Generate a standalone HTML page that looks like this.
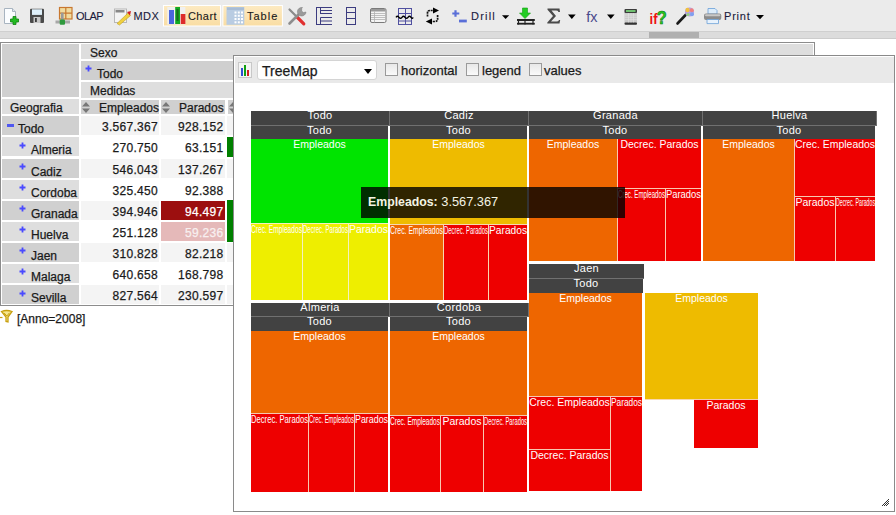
<!DOCTYPE html>
<html><head><meta charset="utf-8"><style>
html,body{margin:0;padding:0;}
body{width:896px;height:515px;position:relative;overflow:hidden;background:#fff;font-family:"Liberation Sans", sans-serif;}
body div{position:absolute;box-sizing:border-box;}
.t{white-space:nowrap;line-height:1;-webkit-text-stroke:0.25px currentColor;}
.r{text-align:right;}
.lb{text-align:center;color:#fff;line-height:1;white-space:nowrap;overflow:visible;}
.lb span{display:inline-block;transform-origin:50% 0;}
.hl{text-align:center;color:#fff;font-size:11px;line-height:1;white-space:nowrap;margin-top:-1px;letter-spacing:0.3px}
</style></head><body>
<div style="left:0px;top:0px;width:896px;height:31px;background:#ebebeb;"></div><div style="left:0px;top:31px;width:896px;height:1px;background:#cfcfcf;"></div><div style="left:0px;top:32px;width:896px;height:6px;background:#dcdcdc;"></div><div style="left:649px;top:32px;width:50px;height:6px;background:#b0b0b0;"></div><div style="left:0px;top:38px;width:896px;height:1px;background:#cccccc;"></div><div style="left:0px;top:42px;width:815px;height:264px;background:#8c8c8c;"></div><div style="left:1px;top:43px;width:813px;height:262px;background:#ffffff;"></div><div style="left:2px;top:44px;width:77px;height:53px;background:#d0d0d0;"></div><div style="left:81px;top:44px;width:732px;height:15px;background:#dedede;"></div><div style="left:81px;top:61px;width:732px;height:19px;background:#cfcfcf;"></div><div style="left:81px;top:82px;width:732px;height:16px;background:#dedede;"></div><div style="left:2px;top:99px;width:77px;height:15px;background:#dedede;"></div><div style="left:81px;top:100px;width:78px;height:14px;background:#d0d0d0;"></div><div style="left:161px;top:100px;width:64px;height:14px;background:#d0d0d0;"></div><div style="left:228px;top:100px;width:12px;height:14px;background:#d0d0d0;"></div><div class="t" style="left:90px;top:47px;font-size:12px;color:#1a1a1a;">Sexo</div><div class="t" style="left:97px;top:68px;font-size:12px;color:#1a1a1a;">Todo</div><div class="t" style="left:90px;top:85px;font-size:12px;color:#1a1a1a;">Medidas</div><div class="t" style="left:10px;top:102px;font-size:12px;color:#1a1a1a;">Geografia</div><div class="t" style="left:99px;top:102px;font-size:12px;color:#1a1a1a;">Empleados</div><div class="t" style="left:179px;top:102px;font-size:12px;color:#1a1a1a;">Parados</div><svg style="position:absolute;left:85px;top:65px" width="8" height="8"><path d="M3.5 0.5 V6.5 M0.5 3.5 H6.5" stroke="#4a4aff" stroke-width="1.8"/></svg><svg style="position:absolute;left:82px;top:102px" width="8" height="11"><path d="M0 4.5 L4 0 L8 4.5Z M0 6.5 L4 11 L8 6.5Z" fill="#777"/></svg><svg style="position:absolute;left:162px;top:102px" width="8" height="11"><path d="M0 4.5 L4 0 L8 4.5Z M0 6.5 L4 11 L8 6.5Z" fill="#777"/></svg><svg style="position:absolute;left:229px;top:102px" width="8" height="11"><path d="M0 4.5 L4 0 L8 4.5Z M0 6.5 L4 11 L8 6.5Z" fill="#777"/></svg><div style="left:2px;top:116.3px;width:77px;height:19.000000000000014px;background:#d0d0d0;"></div><div style="left:81px;top:116.3px;width:78px;height:19.000000000000014px;background:#f4f4f4;"></div><div style="left:161px;top:116.3px;width:64px;height:19.000000000000014px;background:#f4f4f4;"></div><div style="left:227px;top:116.3px;width:6px;height:19.000000000000014px;background:#f4f4f4;"></div><div style="left:7px;top:124.3px;width:7px;height:2.5px;background:#5058f0"></div><div class="t" style="left:18px;top:123.3px;font-size:12px;color:#1a1a1a;">Todo</div><div class="t r" style="left:81px;width:77px;top:121.3px;font-size:12px;letter-spacing:0.3px;color:#1a1a1a">3.567.367</div><div class="t r" style="left:161px;width:62.5px;top:121.3px;font-size:12px;letter-spacing:0.3px;color:#1a1a1a">928.152</div><div style="left:2px;top:137.4px;width:77px;height:19.0px;background:#dedede;"></div><div style="left:81px;top:137.4px;width:78px;height:19.0px;background:#ffffff;"></div><div style="left:161px;top:137.4px;width:64px;height:19.0px;background:#ffffff;"></div><div style="left:227px;top:137.4px;width:6px;height:19.0px;background:#ffffff;"></div><svg style="position:absolute;left:19px;top:142px" width="8" height="8"><path d="M3.5 0.5 V6.5 M0.5 3.5 H6.5" stroke="#4a4aff" stroke-width="1.8"/></svg><div class="t" style="left:31px;top:144.4px;font-size:12px;color:#1a1a1a;">Almeria</div><div class="t r" style="left:81px;width:77px;top:142.4px;font-size:12px;letter-spacing:0.3px;color:#1a1a1a">270.750</div><div class="t r" style="left:161px;width:62.5px;top:142.4px;font-size:12px;letter-spacing:0.3px;color:#1a1a1a">63.151</div><div style="left:2px;top:158.5px;width:77px;height:19.0px;background:#d0d0d0;"></div><div style="left:81px;top:158.5px;width:78px;height:19.0px;background:#f4f4f4;"></div><div style="left:161px;top:158.5px;width:64px;height:19.0px;background:#f4f4f4;"></div><div style="left:227px;top:158.5px;width:6px;height:19.0px;background:#f4f4f4;"></div><svg style="position:absolute;left:19px;top:163px" width="8" height="8"><path d="M3.5 0.5 V6.5 M0.5 3.5 H6.5" stroke="#4a4aff" stroke-width="1.8"/></svg><div class="t" style="left:31px;top:165.5px;font-size:12px;color:#1a1a1a;">Cadiz</div><div class="t r" style="left:81px;width:77px;top:163.5px;font-size:12px;letter-spacing:0.3px;color:#1a1a1a">546.043</div><div class="t r" style="left:161px;width:62.5px;top:163.5px;font-size:12px;letter-spacing:0.3px;color:#1a1a1a">137.267</div><div style="left:2px;top:179.6px;width:77px;height:19.0px;background:#dedede;"></div><div style="left:81px;top:179.6px;width:78px;height:19.0px;background:#ffffff;"></div><div style="left:161px;top:179.6px;width:64px;height:19.0px;background:#ffffff;"></div><div style="left:227px;top:179.6px;width:6px;height:19.0px;background:#ffffff;"></div><svg style="position:absolute;left:19px;top:184px" width="8" height="8"><path d="M3.5 0.5 V6.5 M0.5 3.5 H6.5" stroke="#4a4aff" stroke-width="1.8"/></svg><div class="t" style="left:31px;top:186.6px;font-size:12px;color:#1a1a1a;">Cordoba</div><div class="t r" style="left:81px;width:77px;top:184.6px;font-size:12px;letter-spacing:0.3px;color:#1a1a1a">325.450</div><div class="t r" style="left:161px;width:62.5px;top:184.6px;font-size:12px;letter-spacing:0.3px;color:#1a1a1a">92.388</div><div style="left:2px;top:200.7px;width:77px;height:19.0px;background:#d0d0d0;"></div><div style="left:81px;top:200.7px;width:78px;height:19.0px;background:#f4f4f4;"></div><div style="left:161px;top:200.7px;width:64px;height:19.0px;background:#9c0f0f;"></div><div style="left:227px;top:200.7px;width:6px;height:19.0px;background:#f4f4f4;"></div><svg style="position:absolute;left:19px;top:205px" width="8" height="8"><path d="M3.5 0.5 V6.5 M0.5 3.5 H6.5" stroke="#4a4aff" stroke-width="1.8"/></svg><div class="t" style="left:31px;top:207.7px;font-size:12px;color:#1a1a1a;">Granada</div><div class="t r" style="left:81px;width:77px;top:205.7px;font-size:12px;letter-spacing:0.3px;color:#1a1a1a">394.946</div><div class="t r" style="left:161px;width:62.5px;top:205.7px;font-size:12px;letter-spacing:0.3px;color:#ffffff">94.497</div><div style="left:2px;top:221.8px;width:77px;height:19.0px;background:#dedede;"></div><div style="left:81px;top:221.8px;width:78px;height:19.0px;background:#ffffff;"></div><div style="left:161px;top:221.8px;width:64px;height:19.0px;background:#e5b9b9;"></div><div style="left:227px;top:221.8px;width:6px;height:19.0px;background:#ffffff;"></div><svg style="position:absolute;left:19px;top:226px" width="8" height="8"><path d="M3.5 0.5 V6.5 M0.5 3.5 H6.5" stroke="#4a4aff" stroke-width="1.8"/></svg><div class="t" style="left:31px;top:228.8px;font-size:12px;color:#1a1a1a;">Huelva</div><div class="t r" style="left:81px;width:77px;top:226.8px;font-size:12px;letter-spacing:0.3px;color:#1a1a1a">251.128</div><div class="t r" style="left:161px;width:62.5px;top:226.8px;font-size:12px;letter-spacing:0.3px;color:#f8f0f0">59.236</div><div style="left:2px;top:242.9px;width:77px;height:18.99999999999997px;background:#d0d0d0;"></div><div style="left:81px;top:242.9px;width:78px;height:18.99999999999997px;background:#f4f4f4;"></div><div style="left:161px;top:242.9px;width:64px;height:18.99999999999997px;background:#f4f4f4;"></div><div style="left:227px;top:242.9px;width:6px;height:18.99999999999997px;background:#f4f4f4;"></div><svg style="position:absolute;left:19px;top:247px" width="8" height="8"><path d="M3.5 0.5 V6.5 M0.5 3.5 H6.5" stroke="#4a4aff" stroke-width="1.8"/></svg><div class="t" style="left:31px;top:249.9px;font-size:12px;color:#1a1a1a;">Jaen</div><div class="t r" style="left:81px;width:77px;top:247.9px;font-size:12px;letter-spacing:0.3px;color:#1a1a1a">310.828</div><div class="t r" style="left:161px;width:62.5px;top:247.9px;font-size:12px;letter-spacing:0.3px;color:#1a1a1a">82.218</div><div style="left:2px;top:264.0px;width:77px;height:19.0px;background:#dedede;"></div><div style="left:81px;top:264.0px;width:78px;height:19.0px;background:#ffffff;"></div><div style="left:161px;top:264.0px;width:64px;height:19.0px;background:#ffffff;"></div><div style="left:227px;top:264.0px;width:6px;height:19.0px;background:#ffffff;"></div><svg style="position:absolute;left:19px;top:268px" width="8" height="8"><path d="M3.5 0.5 V6.5 M0.5 3.5 H6.5" stroke="#4a4aff" stroke-width="1.8"/></svg><div class="t" style="left:31px;top:271.0px;font-size:12px;color:#1a1a1a;">Malaga</div><div class="t r" style="left:81px;width:77px;top:269.0px;font-size:12px;letter-spacing:0.3px;color:#1a1a1a">640.658</div><div class="t r" style="left:161px;width:62.5px;top:269.0px;font-size:12px;letter-spacing:0.3px;color:#1a1a1a">168.798</div><div style="left:2px;top:285.1px;width:77px;height:19.0px;background:#d0d0d0;"></div><div style="left:81px;top:285.1px;width:78px;height:19.0px;background:#f4f4f4;"></div><div style="left:161px;top:285.1px;width:64px;height:19.0px;background:#f4f4f4;"></div><div style="left:227px;top:285.1px;width:6px;height:19.0px;background:#f4f4f4;"></div><svg style="position:absolute;left:19px;top:290px" width="8" height="8"><path d="M3.5 0.5 V6.5 M0.5 3.5 H6.5" stroke="#4a4aff" stroke-width="1.8"/></svg><div class="t" style="left:31px;top:292.1px;font-size:12px;color:#1a1a1a;">Sevilla</div><div class="t r" style="left:81px;width:77px;top:290.1px;font-size:12px;letter-spacing:0.3px;color:#1a1a1a">827.564</div><div class="t r" style="left:161px;width:62.5px;top:290.1px;font-size:12px;letter-spacing:0.3px;color:#1a1a1a">230.597</div><div style="left:227px;top:137px;width:6px;height:20px;background:#008000;"></div><div style="left:227px;top:200px;width:6px;height:42px;background:#008000;"></div><svg style="position:absolute;left:0px;top:309px" width="14" height="15"><path d="M1.5 2.5 Q6.5 0.5 12 2.5 L8 8 V13 L6 12.5 V8Z" fill="#f8e890" stroke="#c8a010" stroke-width="1.3"/><path d="M4 3.8 L6.8 7 L9.5 3.8" fill="none" stroke="#c8a010" stroke-width="1"/><path d="M0 8.5 L2.5 8.5" stroke="#c8a010" stroke-width="1.2"/></svg><div class="t" style="left:17px;top:312.5px;font-size:12px;color:#1a1a1a;">[Anno=2008]</div><div style="left:233px;top:55px;width:662px;height:457px;background:#8a8a8a;"></div><div style="left:234px;top:56px;width:660px;height:455px;background:#ffffff;"></div><div style="left:235px;top:57px;width:659px;height:26px;background:#e9e9e9;"></div><div style="left:238px;top:62px;width:14px;height:16px;background:#c8c8c8;"></div><div style="left:239px;top:63px;width:12px;height:14px;background:#f4f4f4;"></div><div style="left:241px;top:68px;width:2px;height:8px;background:#3050d0;"></div><div style="left:244px;top:65px;width:2px;height:11px;background:#10a010;"></div><div style="left:247px;top:70px;width:2px;height:6px;background:#d02020;"></div><div style="left:257px;top:60px;width:119.5px;height:20px;background:#fff;border:1px solid #d4d4d4;border-radius:3px"></div><div class="t" style="left:262px;top:63.5px;font-size:14px;color:#1a1a1a;">TreeMap</div><svg style="position:absolute;left:364px;top:69px" width="8" height="5"><path d="M0 0 L8 0 L4 5Z" fill="#000"/></svg><div style="left:385px;top:63px;width:12.5px;height:12.5px;border:1px solid #9a9a9a;background:linear-gradient(#e8e8e8,#fafafa)"></div><div class="t" style="left:401px;top:63.5px;font-size:13px;color:#1a1a1a;">horizontal</div><div style="left:466px;top:63px;width:12.5px;height:12.5px;border:1px solid #9a9a9a;background:linear-gradient(#e8e8e8,#fafafa)"></div><div class="t" style="left:482px;top:63.5px;font-size:13px;color:#1a1a1a;">legend</div><div style="left:529px;top:63px;width:12.5px;height:12.5px;border:1px solid #9a9a9a;background:linear-gradient(#e8e8e8,#fafafa)"></div><div class="t" style="left:544px;top:63.5px;font-size:13px;color:#1a1a1a;">values</div><svg style="position:absolute;left:0;top:0" width="896" height="515"><path d="M882 505h1v1h-1zM884 505h1v1h-1zM886 505h1v1h-1zM883 504h1v1h-1zM885 504h1v1h-1zM887 504h1v1h-1zM884 503h1v1h-1zM886 503h1v1h-1zM888 503h1v1h-1zM885 502h1v1h-1zM887 502h1v1h-1zM886 501h1v1h-1zM888 501h1v1h-1zM887 500h1v1h-1zM888 499h1v1h-1z" fill="#333"/></svg><div style="left:251px;top:111px;width:626px;height:15px;background:#707070;"></div><div style="left:251px;top:303px;width:278px;height:14px;background:#707070;"></div><div style="left:529px;top:278px;width:115px;height:1px;background:#707070;"></div><div style="left:251px;top:111px;width:138px;height:14px;background:#424242;"></div><div class="hl" style="left:251px;top:111px;width:138px;">Todo</div><div style="left:251px;top:126px;width:137px;height:13px;background:#424242;"></div><div class="hl" style="left:251px;top:126px;width:137px;">Todo</div><div style="left:390px;top:111px;width:138px;height:14px;background:#424242;"></div><div class="hl" style="left:390px;top:111px;width:138px;">Cadiz</div><div style="left:390px;top:126px;width:137px;height:13px;background:#424242;"></div><div class="hl" style="left:390px;top:126px;width:137px;">Todo</div><div style="left:529px;top:111px;width:173px;height:14px;background:#424242;"></div><div class="hl" style="left:529px;top:111px;width:173px;">Granada</div><div style="left:529px;top:126px;width:172px;height:13px;background:#424242;"></div><div class="hl" style="left:529px;top:126px;width:172px;">Todo</div><div style="left:703px;top:111px;width:173px;height:14px;background:#424242;"></div><div class="hl" style="left:703px;top:111px;width:173px;">Huelva</div><div style="left:703px;top:126px;width:172px;height:13px;background:#424242;"></div><div class="hl" style="left:703px;top:126px;width:172px;">Todo</div><div style="left:251px;top:303px;width:138px;height:13px;background:#424242;"></div><div class="hl" style="left:251px;top:303px;width:138px;">Almeria</div><div style="left:251px;top:317px;width:137px;height:14px;background:#424242;"></div><div class="hl" style="left:251px;top:317px;width:137px;">Todo</div><div style="left:390px;top:303px;width:138px;height:13px;background:#424242;"></div><div class="hl" style="left:390px;top:303px;width:138px;">Cordoba</div><div style="left:390px;top:317px;width:137px;height:14px;background:#424242;"></div><div class="hl" style="left:390px;top:317px;width:137px;">Todo</div><div style="left:529px;top:264px;width:115px;height:14px;background:#424242;"></div><div class="hl" style="left:529px;top:264px;width:115px;">Jaen</div><div style="left:529px;top:279px;width:114px;height:14px;background:#424242;"></div><div class="hl" style="left:529px;top:279px;width:114px;">Todo</div><div style="left:251px;top:139px;width:137px;height:161px;background:#f4f0c0;"></div><div style="left:390px;top:139px;width:137px;height:161px;background:#f8d8b0;"></div><div style="left:529px;top:139px;width:172px;height:122px;background:#f8c8b0;"></div><div style="left:703px;top:139px;width:172px;height:122px;background:#f8c8b0;"></div><div style="left:251px;top:331px;width:137px;height:161px;background:#f8c8b0;"></div><div style="left:390px;top:331px;width:137px;height:161px;background:#f8c8b0;"></div><div style="left:529px;top:293px;width:113px;height:198px;background:#f8c8b0;"></div><div style="left:645px;top:293px;width:113px;height:107px;background:#f8d8b0;"></div><div style="left:694px;top:399px;width:64px;height:49px;background:#f8c8b0;"></div><div style="left:251px;top:139px;width:137px;height:84px;background:#00e400;"></div><div class="lb" style="left:251px;top:139px;width:137px;font-size:10.5px">Empleados</div><div style="left:251px;top:224px;width:51px;height:76px;background:#eeee00;"></div><div class="lb" style="left:251px;top:224px;width:80.53px;font-size:10.5px;transform:scaleX(0.6333);transform-origin:0 0">Crec. Empleados</div><div style="left:303px;top:224px;width:45px;height:76px;background:#eeee00;"></div><div class="lb" style="left:303px;top:224px;width:78.20px;font-size:10.5px;transform:scaleX(0.5755);transform-origin:0 0">Decrec. Parados</div><div style="left:349px;top:224px;width:39px;height:76px;background:#eeee00;"></div><div class="lb" style="left:349px;top:224px;width:39.11px;font-size:10.5px;transform:scaleX(0.9973);transform-origin:0 0">Parados</div><div style="left:390px;top:139px;width:137px;height:85px;background:#eebb00;"></div><div class="lb" style="left:390px;top:139px;width:137px;font-size:10.5px">Empleados</div><div style="left:390px;top:225px;width:53px;height:75px;background:#ee6600;"></div><div class="lb" style="left:390px;top:225px;width:80.53px;font-size:10.5px;transform:scaleX(0.6581);transform-origin:0 0">Crec. Empleados</div><div style="left:444px;top:225px;width:44px;height:75px;background:#ee0000;"></div><div class="lb" style="left:444px;top:225px;width:78.20px;font-size:10.5px;transform:scaleX(0.5627);transform-origin:0 0">Decrec. Parados</div><div style="left:489px;top:225px;width:38px;height:75px;background:#ee0000;"></div><div class="lb" style="left:489px;top:225px;width:39.11px;font-size:10.5px;transform:scaleX(0.9717);transform-origin:0 0">Parados</div><div style="left:529px;top:139px;width:88px;height:122px;background:#ee6600;"></div><div class="lb" style="left:529px;top:139px;width:88px;font-size:10.5px">Empleados</div><div style="left:618px;top:139px;width:83px;height:49px;background:#ee0000;"></div><div class="lb" style="left:618px;top:139px;width:83px;font-size:10.5px">Decrec. Parados</div><div style="left:618px;top:189px;width:47px;height:72px;background:#ee0000;"></div><div class="lb" style="left:618px;top:189px;width:80.53px;font-size:10.5px;transform:scaleX(0.5836);transform-origin:0 0">Crec. Empleados</div><div style="left:666px;top:189px;width:35px;height:72px;background:#ee0000;"></div><div class="lb" style="left:666px;top:189px;width:39.11px;font-size:10.5px;transform:scaleX(0.8950);transform-origin:0 0">Parados</div><div style="left:703px;top:139px;width:91px;height:122px;background:#ee6600;"></div><div class="lb" style="left:703px;top:139px;width:91px;font-size:10.5px">Empleados</div><div style="left:795px;top:139px;width:80px;height:57px;background:#ee0000;"></div><div class="lb" style="left:795px;top:139px;width:80.53px;font-size:10.5px;transform:scaleX(0.9934);transform-origin:0 0">Crec. Empleados</div><div style="left:795px;top:197px;width:40px;height:64px;background:#ee0000;"></div><div class="lb" style="left:795px;top:197px;width:40px;font-size:10.5px">Parados</div><div style="left:836px;top:197px;width:39px;height:64px;background:#ee0000;"></div><div class="lb" style="left:836px;top:197px;width:78.20px;font-size:10.5px;transform:scaleX(0.4987);transform-origin:0 0">Decrec. Parados</div><div style="left:251px;top:331px;width:137px;height:82px;background:#ee6600;"></div><div class="lb" style="left:251px;top:331px;width:137px;font-size:10.5px">Empleados</div><div style="left:251px;top:414px;width:57px;height:78px;background:#ee0000;"></div><div class="lb" style="left:251px;top:414px;width:78.20px;font-size:10.5px;transform:scaleX(0.7289);transform-origin:0 0">Decrec. Parados</div><div style="left:309px;top:414px;width:45px;height:78px;background:#ee0000;"></div><div class="lb" style="left:309px;top:414px;width:80.53px;font-size:10.5px;transform:scaleX(0.5588);transform-origin:0 0">Crec. Empleados</div><div style="left:355px;top:414px;width:33px;height:78px;background:#ee0000;"></div><div class="lb" style="left:355px;top:414px;width:39.11px;font-size:10.5px;transform:scaleX(0.8439);transform-origin:0 0">Parados</div><div style="left:390px;top:331px;width:137px;height:84px;background:#ee6600;"></div><div class="lb" style="left:390px;top:331px;width:137px;font-size:10.5px">Empleados</div><div style="left:390px;top:416px;width:50px;height:76px;background:#ee0000;"></div><div class="lb" style="left:390px;top:416px;width:80.53px;font-size:10.5px;transform:scaleX(0.6209);transform-origin:0 0">Crec. Empleados</div><div style="left:441px;top:416px;width:42px;height:76px;background:#ee0000;"></div><div class="lb" style="left:441px;top:416px;width:42px;font-size:10.5px">Parados</div><div style="left:484px;top:416px;width:43px;height:76px;background:#ee0000;"></div><div class="lb" style="left:484px;top:416px;width:78.20px;font-size:10.5px;transform:scaleX(0.5499);transform-origin:0 0">Decrec. Parados</div><div style="left:529px;top:293px;width:113px;height:103px;background:#ee6600;"></div><div class="lb" style="left:529px;top:293px;width:113px;font-size:10.5px">Empleados</div><div style="left:529px;top:397px;width:81px;height:52px;background:#ee0000;"></div><div class="lb" style="left:529px;top:397px;width:81px;font-size:10.5px">Crec. Empleados</div><div style="left:529px;top:450px;width:81px;height:41px;background:#ee0000;"></div><div class="lb" style="left:529px;top:450px;width:81px;font-size:10.5px">Decrec. Parados</div><div style="left:611px;top:397px;width:31px;height:94px;background:#ee0000;"></div><div class="lb" style="left:611px;top:397px;width:39.11px;font-size:10.5px;transform:scaleX(0.7927);transform-origin:0 0">Parados</div><div style="left:645px;top:293px;width:113px;height:106px;background:#eebb00;"></div><div class="lb" style="left:645px;top:293px;width:113px;font-size:10.5px">Empleados</div><div style="left:694px;top:400px;width:64px;height:48px;background:#ee0000;"></div><div class="lb" style="left:694px;top:400px;width:64px;font-size:10.5px">Parados</div><div style="left:361px;top:187px;width:264px;height:31px;background:rgba(0,0,0,0.8)"></div><div class="t" style="left:368px;top:196px;font-size:12.8px;color:#f4f4e4;-webkit-text-stroke:0"><b style="font-size:12.3px">Empleados:</b> 3.567.367</div>
<svg style="position:absolute;left:0;top:0" width="896" height="31" viewBox="0 0 896 31">
<defs>
<linearGradient id="btn" x1="0" y1="0" x2="0" y2="1"><stop offset="0" stop-color="#fdeac2"/><stop offset="1" stop-color="#f9dda3"/></linearGradient>
</defs>
<!-- new doc -->
<path d="M4.5 8.5 H12.5 L15.5 11.5 V23.5 H4.5Z" fill="#fbfdff" stroke="#a8b4c0"/>
<path d="M12.5 8.5 V11.5 H15.5" fill="#e0e8f0" stroke="#a8b4c0"/>
<path d="M13 16.5 h3 v2.5 h2.5 v3 h-2.5 v2.5 h-3 v-2.5 h-2.5 v-3 h2.5z" fill="#22bb22" stroke="#108010" stroke-width="0.8"/>
<!-- save -->
<rect x="30" y="8.7" width="14" height="14.3" rx="1" fill="#4a4a4a"/>
<rect x="32" y="9.3" width="10" height="5.6" fill="#dff0fa"/>
<rect x="33.5" y="17" width="7" height="6" fill="#c8c8c8"/>
<rect x="35" y="18" width="1.8" height="4" fill="#3a3a3a"/>
<!-- olap -->
<rect x="59.5" y="7.5" width="12.5" height="11.5" fill="#f0dca0" stroke="#c87830" stroke-width="1.2"/>
<path d="M65.8 7.5 V19 M59.5 13.2 H72" stroke="#c87830" stroke-width="1.2"/>
<rect x="61" y="12.7" width="2.6" height="7.5" fill="#9a9a9a"/>
<rect x="55.5" y="20.5" width="14.5" height="3" fill="#a8a8a8"/>
<rect x="59.7" y="19.4" width="5.3" height="5.4" rx="1" fill="#2e9a3e"/>
<!-- mdx -->
<rect x="114.5" y="9" width="12" height="13.5" fill="#f4f4f4" stroke="#b8b8b8"/>
<rect x="115.5" y="10" width="9" height="2.5" fill="#888"/>
<path d="M117 23.5 L128 13 L130.5 15.5 L119.5 25Z" fill="#f0d040" stroke="#c0a020" stroke-width="0.6"/>
<path d="M127 12 L131 11 L130 15.5Z" fill="#d02020"/>
<!-- chart button -->
<rect x="163.5" y="5.5" width="57" height="20.5" fill="url(#btn)" stroke="#ffffff"/>
<rect x="167.3" y="7" width="18" height="17.5" fill="#f0f0f0"/>
<rect x="169" y="10" width="5" height="14" fill="#4a66dd"/>
<rect x="175.2" y="7" width="4.8" height="17" fill="#11aa22"/>
<rect x="176.5" y="9" width="2" height="12" fill="#204020" opacity="0.6"/>
<rect x="180.7" y="14" width="4.7" height="10" fill="#dd2b2b"/>
<!-- table button -->
<rect x="222.9" y="5.5" width="59.5" height="20.5" fill="url(#btn)" stroke="#ffffff"/>
<rect x="226.5" y="7" width="17.8" height="17.8" fill="#b9cce2"/>
<rect x="227" y="7.5" width="17" height="2.5" fill="#a8bcd4"/>
<g fill="#ffffff"><rect x="234.5" y="11.5" width="2" height="2"/><rect x="237.8" y="11.5" width="2" height="2"/><rect x="241" y="11.5" width="2" height="2"/>
<rect x="234.5" y="14.8" width="2" height="2"/><rect x="237.8" y="14.8" width="2" height="2"/><rect x="241" y="14.8" width="2" height="2"/>
<rect x="234.5" y="18" width="2" height="2"/><rect x="237.8" y="18" width="2" height="2"/><rect x="241" y="18" width="2" height="2"/>
<rect x="234.5" y="21.3" width="2" height="2"/><rect x="237.8" y="21.3" width="2" height="2"/><rect x="241" y="21.3" width="2" height="2"/></g>
<!-- tools -->
<path d="M289.5 9.5 L297 17" stroke="#8a8a8a" stroke-width="2.2" stroke-linecap="round"/>
<path d="M297 17 L303.8 23.8" stroke="#e03030" stroke-width="3.2" stroke-linecap="round"/>
<path d="M289.5 23.5 L300 13" stroke="#8e8e8e" stroke-width="2.6" stroke-linecap="round"/>
<path d="M302.5 7.5 a4.3 4.3 0 1 0 3.5 4.5 l-2.6 0.6 l-1.8 -1.6 l0.2 -2.6z" fill="#9a9a9a" stroke="#7a7a7a" stroke-width="0.5"/>
<!-- hierarchy -->
<g stroke="#3c3c80" stroke-width="1" fill="none">
<path d="M316.5 7.5 V24.5 M316 7.5 H332 M320.5 7.5 V14 M320.5 10.5 H332 M320.5 13.5 H332 M320.5 17.5 V24.5 M320.5 17.5 H332 M320.5 21 H332 M316 24.5 H332"/>
</g>
<!-- column -->
<rect x="346.5" y="7.5" width="9" height="17" fill="none" stroke="#3c3c80" stroke-width="1"/>
<path d="M346.5 12.5 H355.5 M346.5 18.5 H355.5" stroke="#3c3c80" stroke-width="1"/>
<!-- table grid -->
<rect x="370.5" y="8.5" width="15.5" height="14" rx="1.5" fill="#f4f4f4" stroke="#7a7a7a"/>
<rect x="371" y="9" width="14.5" height="2.5" fill="#9a9a9a"/>
<path d="M371 13.5 H385.5 M371 15.5 H385.5 M371 17.5 H385.5 M371 19.5 H385.5 M374.5 11.5 V22.5" stroke="#b0b0b0" stroke-width="0.8"/>
<!-- grid wave -->
<g stroke="#5050a0" stroke-width="1" fill="none">
<rect x="398.5" y="8.5" width="13" height="16"/>
<path d="M405.5 8.5 V24.5 M398.5 13.5 H411.5 M398.5 21 H411.5"/>
</g>
<path d="M396 17.3 q1.5 -2 3 0 t3 0 t3 0 t3 0 t3 0 t2 0" stroke="#000" stroke-width="1.4" fill="none"/>
<!-- refresh -->
<path d="M427.5 16.5 V13 Q427.5 10.5 430 10.5 H434" stroke="#111" stroke-width="1.7" fill="none" stroke-dasharray="2 0.7"/>
<path d="M433 7.4 L439 10.5 L433 13.6Z" fill="#000"/>
<path d="M437.6 15 V19 Q437.6 21.5 435 21.5 H431" stroke="#111" stroke-width="1.7" fill="none" stroke-dasharray="2 0.7"/>
<path d="M432 18.4 L425.8 21.5 L432 24.4Z" fill="#000"/>
<!-- plus minus -->
<path d="M455.5 10.2 V16.8 M452.3 13.5 H459.3" stroke="#5a6fd8" stroke-width="2.2"/>
<rect x="459" y="19.6" width="7.8" height="2.8" fill="#5a6fd8"/>
<path d="M502 15.3 H509.2 L505.6 19Z" fill="#000"/>
<!-- download -->
<path d="M522.5 8 H527.5 V13 H530.5 L525 18.6 L519.5 13 H522.5Z" fill="#22cc22" stroke="#12a012" stroke-width="0.6"/>
<rect x="517" y="19" width="17.8" height="2" fill="#222"/>
<rect x="517" y="22.8" width="17.8" height="1.8" fill="#222"/>
<path d="M518.5 19 V24.6 M525 19 V24.6 M533 19 V24.6" stroke="#222" stroke-width="1.2"/>
<!-- sigma -->
<path d="M547.5 8.6 H559.5 L560 12 H558.5 Q558 10.6 556 10.6 H551.5 L556 16 L551 21.6 H556.5 Q558.5 21.6 559 20 H560.2 L559.5 23.5 H547.3 V22.5 L553 16 L547.5 9.8Z" fill="#4a4a4a"/>
<path d="M568 14.6 H575.7 L571.8 19Z" fill="#000"/>
<!-- fx -->
<text x="586.3" y="21.9" font-family="Liberation Sans" font-size="15.5" fill="#4a4a8c" textLength="11.2" lengthAdjust="spacingAndGlyphs">fx</text>
<path d="M607 14.6 H614.6 L610.8 19Z" fill="#000"/>
<!-- calculator -->
<rect x="624.5" y="9" width="12.5" height="15.5" rx="1.5" fill="#cacaca"/>
<rect x="624.5" y="9" width="12.5" height="4" rx="1" fill="#3c3c3c"/>
<rect x="626" y="10" width="9.5" height="2" fill="#70c070"/>
<rect x="624.5" y="22.5" width="12.5" height="2.2" rx="1" fill="#333"/>
<path d="M625 15 H637 M625 17.3 H637 M625 19.6 H637 M628.5 13 V22.5 M631 13 V22.5 M633.5 13 V22.5" stroke="#e4e4e4" stroke-width="0.6"/>
<!-- if? -->
<text x="649.5" y="23.6" font-family="Liberation Sans" font-weight="bold" font-size="14.5" fill="#ee1111" textLength="8" lengthAdjust="spacingAndGlyphs">if</text>
<text x="656.8" y="23.6" font-family="Liberation Sans" font-weight="bold" font-size="19" fill="#22cc22" stroke="#107010" stroke-width="0.6" textLength="10" lengthAdjust="spacingAndGlyphs">?</text>
<!-- wand -->
<path d="M677.5 23.5 L687 13.5" stroke="#1a1a1a" stroke-width="2.6" stroke-linecap="round"/>
<circle cx="689.5" cy="12" r="4.6" fill="#b8a0e0"/>
<circle cx="687.5" cy="10" r="2.2" fill="#f0c040"/>
<circle cx="691.8" cy="10.2" r="2" fill="#f08080"/>
<circle cx="692" cy="14.2" r="2" fill="#80a0f0"/>
<circle cx="688" cy="14.5" r="1.6" fill="#90d080"/>
<!-- printer -->
<path d="M708 8.5 H715 L717 10.5 V14 H708Z" fill="#dcecfa" stroke="#6aa0d8" stroke-width="0.8"/>
<rect x="704" y="13.5" width="17.3" height="6.5" rx="2" fill="#8c8c8c"/>
<rect x="705" y="14.3" width="15.3" height="2" rx="1" fill="#c8c8c8"/>
<path d="M707 19.5 H718.5 V23.6 H707Z" fill="#e8f2fc" stroke="#6aa0d8" stroke-width="0.8"/>
<path d="M756 15 H764 L760 19.2Z" fill="#000"/>
</svg>
<div class="t" style="-webkit-text-stroke:0.1px currentColor;left:76px;top:11px;font-size:11px;color:#1a1a3a;letter-spacing:-0.6px">OLAP</div>
<div class="t" style="-webkit-text-stroke:0.1px currentColor;left:133.5px;top:11px;font-size:11px;color:#1a1a3a;letter-spacing:0.4px">MDX</div>
<div class="t" style="-webkit-text-stroke:0.1px currentColor;left:188px;top:11px;font-size:11px;color:#1a1a1a;letter-spacing:0.4px">Chart</div>
<div class="t" style="-webkit-text-stroke:0.1px currentColor;left:247px;top:11px;font-size:11px;color:#1a1a1a;letter-spacing:1px">Table</div>
<div class="t" style="-webkit-text-stroke:0.1px currentColor;left:471px;top:11px;font-size:11px;color:#1a2040;letter-spacing:1.2px">Drill</div>
<div class="t" style="-webkit-text-stroke:0.1px currentColor;left:724px;top:11px;font-size:11px;color:#1a1a3a;letter-spacing:0.8px">Print</div>

</body></html>
